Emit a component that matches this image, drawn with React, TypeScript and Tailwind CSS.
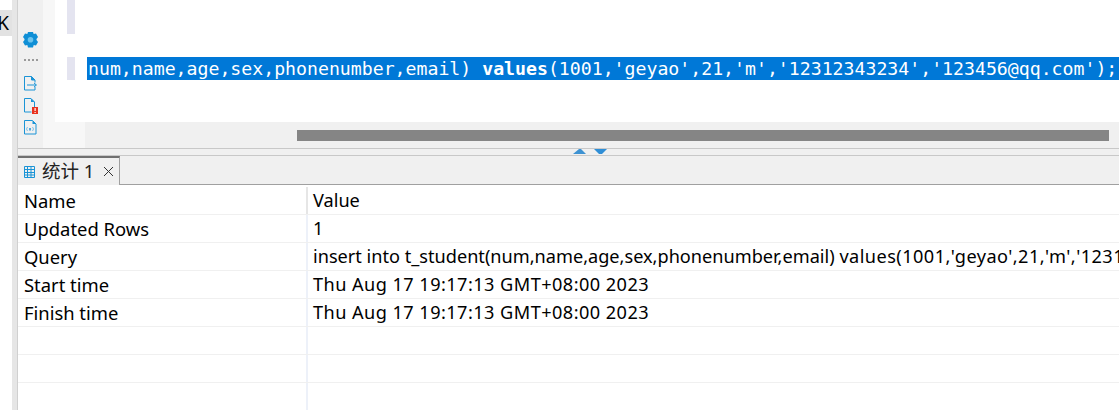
const rows = [
  ["Name", "Value"],
  ["Updated Rows", "1"],
  ["Query", <>insert into t_student(num,name,age,sex,phonenumber,email) <span className="tracking-[0.45px]">values(1001,'geyao',21,'m','12312343234','123456@qq.com');</span></>],
  ["Start time", "Thu Aug 17 19:17:13 GMT+08:00 2023"],
  ["Finish time", "Thu Aug 17 19:17:13 GMT+08:00 2023"],
  ["", ""],
  ["", ""],
  ["", ""],
];

function Gear() {
  return (
    <svg width="15" height="16" viewBox="0 0 15 16">
      <path fill="#0f8fd6" d="M5 0h5l.7 2 2.300-.4 2 3.400-1.500 1.900v1.200l1.500 1.900-2 3.400-2.300-.4-.7 2.600H5l-.7-2.600-2.300.4-2-3.400 1.500-1.900V6.900L0 5l2-3.400 2.300.4z" />
      <circle cx="7.500" cy="7.800" r="2.800" fill="#6cc4ee" />
    </svg>
  );
}

function FileOut() {
  return (
    <svg width="13" height="15" viewBox="0 0 13 15" fill="none" stroke="#1b94d6" strokeWidth="1">
      <path d="M.5.500h7l3.500 3.500v2.500M.5.500v13.500h10.500v-3" />
      <path d="M7.500.500v3.500h3.500" fill="#1b94d6" />
      <path d="M3 9h9M10 7l2.500 2-2.500 2" />
    </svg>
  );
}

function FileErr() {
  return (
    <svg width="14" height="16" viewBox="0 0 14 16">
      <path d="M.5.500h6.500l3.500 3.500v5M.5.500v13.500h7" fill="none" stroke="#1b94d6" />
      <path d="M7 .500v3.500h3.500z" fill="#1b94d6" />
      <rect x="8" y="9" width="6" height="7" fill="#e8321f" />
      <rect x="10.500" y="10" width="1.200" height="3" fill="#fff" />
      <rect x="10.500" y="14" width="1.200" height="1" fill="#fff" />
    </svg>
  );
}

function FileVar() {
  return (
    <svg width="13" height="15" viewBox="0 0 13 15" fill="none">
      <path d="M.5.500h8l3.500 3.500v10H.5z" stroke="#1b94d6" />
      <path d="M8.500.500v3.500H12z" fill="#1b94d6" />
      <path d="M3.500 7l-1 2 1 2M8.500 7l1 2-1 2" stroke="#7fbfe6" />
      <rect x="5" y="8" width="2" height="2.500" fill="#4fa8dc" />
    </svg>
  );
}

function GridIcon() {
  return (
    <svg width="11" height="12" viewBox="0 0 11 12" fill="none" stroke="#1b94d6" strokeWidth="1">
      <path d="M.5.500h10v11H.5z" />
      <path d="M.5 3.500h10M.5 6.500h10M.5 9h10M3.500.500v11M7 .500v11" />
    </svg>
  );
}

export default function App() {
  return (
    <div className="flex h-[410px] w-[1119px] overflow-hidden bg-white font-['Noto_Sans',sans-serif] text-black">
      <div className="w-[12px] shrink-0 pt-[10px]">
        <div className="flex h-[26px] w-[12px] items-center justify-end overflow-hidden bg-[#e2e2e2] text-[19px] leading-none">
          <span className="pr-[3px]">K</span>
        </div>
      </div>
      <div className="w-[6px] shrink-0 border-r border-[#d0d0d0] bg-[#e6e6e6]" />

      <div className="flex min-w-0 flex-1 flex-col">
        <div className="flex h-[148px] shrink-0 bg-[#f0f0f0]">
          <div className="flex w-[25px] shrink-0 flex-col items-center pt-[32px]">
            <Gear />
            <div className="mt-[11px] h-[2px] w-[14px] border-t-2 border-dotted border-[#9a9a9a]" />
            <div className="mt-[15px]"><FileOut /></div>
            <div className="mt-[7px]"><FileErr /></div>
            <div className="mt-[6px]"><FileVar /></div>
          </div>
          <div className="flex min-w-0 flex-1 flex-col">
            <div className="flex h-[122px] shrink-0 bg-[#f7f7f7]">
              <div className="ml-[12px] flex h-[122px] w-[30px] shrink-0 flex-col bg-white">
                <div className="ml-[12px] h-[34px] w-[8px] bg-[#e4e4f0]" />
                <div className="ml-[12px] mt-[23px] h-[23px] w-[8px] bg-[#e4e4f0]" />
              </div>
              <div className="min-w-0 flex-1 overflow-hidden bg-white pt-[57px] pl-[2px]">
                <div className="h-[23px] whitespace-nowrap bg-[#0078d7] pl-px font-['DejaVu_Sans_Mono',monospace] text-[18.2px] leading-[23px] text-white">
                  num,name,age,sex,phonenumber,email) <b>values</b>(1001,'geyao',21,'m','12312343234','123456@qq.com');
                </div>
              </div>
            </div>
            <div className="flex h-[26px] shrink-0 pt-[8px]">
              <div className="w-[42px] shrink-0 -mt-[8px] bg-[#f7f7f7]" />
              <div className="ml-[212px] mr-[10px] h-[11px] flex-1 bg-[#858585]" />
            </div>
          </div>
        </div>

        <div className="relative h-[8px] shrink-0 border-y border-[#c8c8c8] bg-[#f0f0f0]">
          <svg className="absolute left-[555px] top-0" width="46" height="8" viewBox="0 0 46 8">
            <path d="M0 5 L6 0 H8 L13 5z" fill="#3d92d2" />
            <path d="M21 0 H34 L29 5 H26z" fill="#2f8ed6" />
          </svg>
        </div>

        <div className="flex h-[29px] shrink-0 border-b border-[#a0a0a0] bg-[#f0f0f0]">
          <div className="-mb-px flex h-[29px] w-[102px] items-center border-t-2 border-r border-t-[#707070] border-r-[#a0a0a0] bg-[#f0f0f0] pl-[6px]">
            <GridIcon />
            <span className="ml-[7px] font-['Noto_Sans','Noto_Sans_CJK_SC',sans-serif] text-[18.5px] leading-none text-[#222]">统计 1</span>
            <svg className="ml-[9px]" width="11" height="11" viewBox="0 0 11 11" stroke="#333" strokeWidth="1"><path d="M1 1l9 9M10 1l-9 9" /></svg>
          </div>
        </div>

        <div className="min-h-0 flex-1 pt-[2px]">
          {rows.map((r, i) => (
            <div key={i} className="flex h-[28px] border-b border-[#f0f0f0] leading-[27px]">
              <div className={`w-[290px] shrink-0 whitespace-nowrap border-r-2 pl-[6px] text-[18.4px] ${i === 0 ? "border-[#e6e6e6]" : "border-[#edf1f9]"}`}>{r[0]}</div>
              <div className={`min-w-0 flex-1 overflow-hidden whitespace-nowrap pl-[5px] text-[18.15px] ${i === 3 || i === 4 ? "tracking-[0.45px]" : ""}`}>{r[1]}</div>
            </div>
          ))}
        </div>
      </div>
    </div>
  );
}
